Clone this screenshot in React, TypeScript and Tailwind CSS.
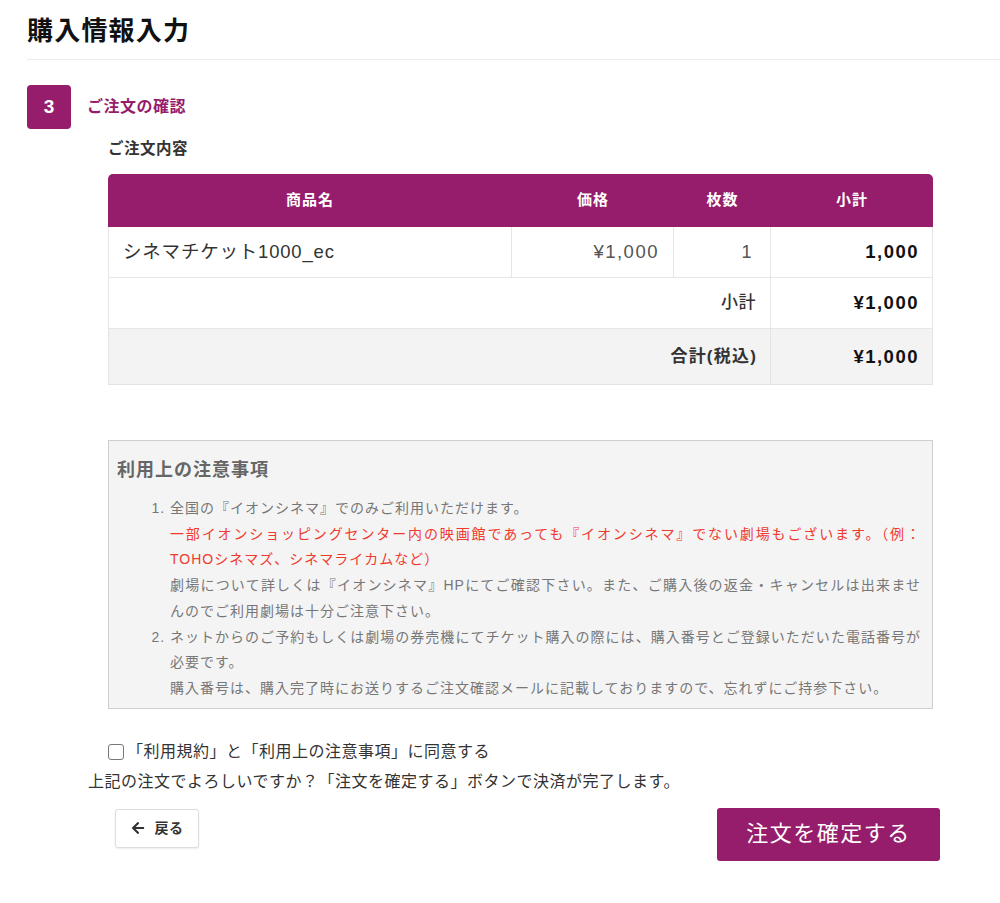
import { FaArrowLeft } from 'react-icons/fa';

const font = { fontFamily: '"Liberation Sans", "Noto Sans CJK JP", sans-serif' };

const items = [
    { name: 'シネマチケット1000_ec', price: '¥1,000', qty: '1', subtotal: '1,000' },
];

export default function App() {
    return (
        <div className="min-h-[903px] bg-white pl-[27px]" style={font}>
            {/* page title */}
            <h1 className="pt-[13px] pb-[10px] text-[26px] leading-[36px] font-bold tracking-[1.2px] text-[#111]">
                購入情報入力
            </h1>
            <div className="border-t border-[#ebebeb]" />

            {/* step header */}
            <div className="mt-[25px] flex items-center gap-[16px]">
                <div className="flex h-[44px] w-[44px] items-center justify-center rounded-[4px] bg-[#961d6c] text-[19px] font-bold text-white">
                    3
                </div>
                <h2 className="text-[16px] font-bold tracking-[0.5px] text-[#961d6c]">ご注文の確認</h2>
            </div>

            <div className="ml-[81px] w-[825px]">
                <h3 className="mt-[9px] text-[15.5px] leading-[22px] font-bold tracking-[0.5px] text-[#333]">ご注文内容</h3>

                {/* order table */}
                <div className="mt-[14px]">
                    <div className="grid h-[53px] grid-cols-[404px_162px_97px_162px] items-center rounded-t-[5px] bg-[#961d6c] text-center text-[15px] font-bold tracking-[1px] text-white">
                        <div>商品名</div>
                        <div>価格</div>
                        <div>枚数</div>
                        <div>小計</div>
                    </div>
                    {items.map((item, i) => (
                        <div key={i} className="grid h-[51px] grid-cols-[404px_162px_97px_162px] text-[18px] tracking-[1.5px]">
                            <div className="flex items-center border-b border-l border-r border-[#e6e6e6] pl-[14px] text-[18.5px] tracking-[0.8px] text-[#333]">
                                {item.name}
                            </div>
                            <div className="flex items-center justify-end border-b border-r border-[#e6e6e6] pr-[14px] text-[18.5px] text-[#555]">
                                {item.price}
                            </div>
                            <div className="flex items-center justify-end border-b border-r border-[#e6e6e6] pr-[17px] text-[#555]">
                                {item.qty}
                            </div>
                            <div className="flex items-center justify-end border-b border-r border-[#e6e6e6] pr-[13px] text-[18.5px] font-bold text-[#111]">
                                {item.subtotal}
                            </div>
                        </div>
                    ))}
                    <div className="grid h-[51px] grid-cols-[663px_162px] text-[17px]">
                        <div className="flex items-center justify-end border-b border-l border-r border-[#e6e6e6] pr-[14px] font-medium tracking-[0.5px] text-[#333]">
                            小計
                        </div>
                        <div className="flex items-center justify-end border-b border-r border-[#e6e6e6] pr-[13px] text-[18.5px] font-bold tracking-[1.5px] text-[#111]">
                            ¥1,000
                        </div>
                    </div>
                    <div className="grid h-[56px] grid-cols-[663px_162px] bg-[#f3f3f3] text-[17px]">
                        <div className="flex items-center justify-end border-b border-l border-r border-[#e3e3e3] pr-[13px] font-bold tracking-[1.2px] text-[#333]">
                            合計(税込)
                        </div>
                        <div className="flex items-center justify-end border-b border-r border-[#e3e3e3] pr-[13px] text-[18.5px] font-bold tracking-[1.5px] text-[#111]">
                            ¥1,000
                        </div>
                    </div>
                </div>

                {/* notes */}
                <div className="mt-[55px] border border-[#cfcfcf] bg-[#f4f4f4] px-[8px] pt-[16px] pb-[6px]">
                    <h4 className="text-[18px] leading-[26px] font-bold tracking-[1px] text-[#666]">利用上の注意事項</h4>
                    <ol className="mt-[13px] list-decimal pl-[53px] pr-[3px] text-justify text-[14px] leading-[25.7px] tracking-[1px] text-[#777]">
                        <li>
                            全国の『イオンシネマ』でのみご利用いただけます。
                            <br />
                            <span className="text-[#ef3a2f]">
                                一部イオンショッピングセンター内の映画館であっても『イオンシネマ』でない劇場もございます。（例：TOHOシネマズ、シネマライカムなど）
                            </span>
                            <br />
                            劇場について詳しくは『イオンシネマ』HPにてご確認下さい。また、ご購入後の返金・キャンセルは出来ませんのでご利用劇場は十分ご注意下さい。
                        </li>
                        <li>
                            ネットからのご予約もしくは劇場の券売機にてチケット購入の際には、購入番号とご登録いただいた電話番号が必要です。
                            <br />
                            購入番号は、購入完了時にお送りするご注文確認メールに記載しておりますので、忘れずにご持参下さい。
                        </li>
                    </ol>
                </div>
            </div>

            {/* confirmation */}
            <div className="ml-[61px] w-[852px] text-[16px] leading-[24px] tracking-[0.5px] text-[#333]">
                <label className="mt-[31px] ml-[20px] flex items-center gap-[3px]">
                    <input
                        type="checkbox"
                        className="m-0 h-[16px] w-[16px] shrink-0 appearance-none rounded-[3px] border border-[#777] bg-white"
                    />
                    <span>「利用規約」と「利用上の注意事項」に同意する</span>
                </label>
                <p className="mt-[6px]">上記の注文でよろしいですか？「注文を確定する」ボタンで決済が完了します。</p>

                <div className="mt-[14px] flex items-start justify-between">
                    <button className="mt-[1px] ml-[27px] flex h-[39px] w-[84px] items-center justify-center gap-[10px] rounded-[3px] border border-[#dedede] bg-white text-[14px] font-bold text-[#333] shadow-[0_1px_2px_rgba(0,0,0,0.08)]">
                        <FaArrowLeft className="h-[14px] w-[14px]" />
                        <span>戻る</span>
                    </button>
                    <button className="flex h-[53px] w-[223px] items-center justify-center rounded-[3px] bg-[#961d6c] text-[22px] tracking-[1.5px] text-white">
                        注文を確定する
                    </button>
                </div>
            </div>
        </div>
    );
}
